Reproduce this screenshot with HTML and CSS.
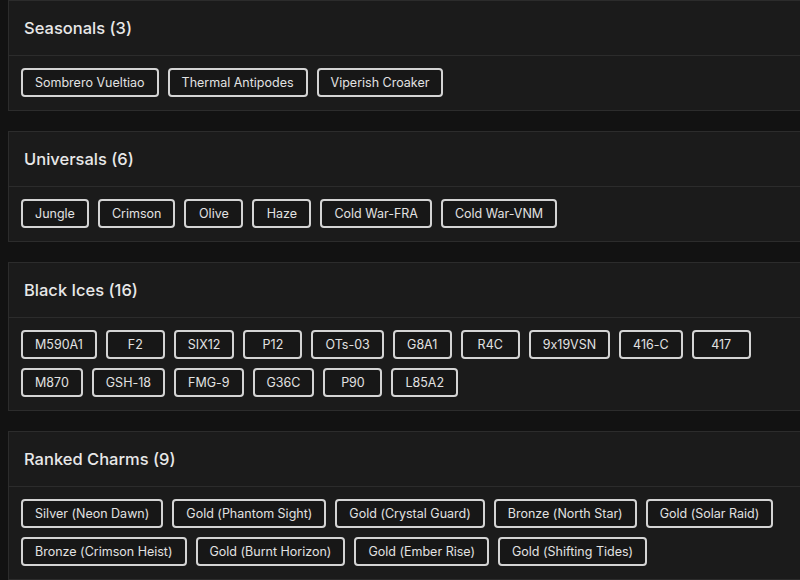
FILE: index.html
```html
<!DOCTYPE html>
<html lang="en">

<head>
	<meta charset="UTF-8" />
	<meta name="viewport" content="width=device-width, initial-scale=1.0" />
	<title>Collection</title>
	<link rel="stylesheet" href="styles.css">
</head>

<body>
	<div class="page">
		<div class="card">
			<div class="card-head">
				<p class="card-title">Seasonals (3)</p>
			</div>
			<div class="card-body">
				<span class="tag">Sombrero Vueltiao</span>
				<span class="tag">Thermal Antipodes</span>
				<span class="tag">Viperish Croaker</span>
			</div>
		</div>
		<div class="card">
			<div class="card-head">
				<p class="card-title">Universals (6)</p>
			</div>
			<div class="card-body">
				<span class="tag">Jungle</span>
				<span class="tag">Crimson</span>
				<span class="tag">Olive</span>
				<span class="tag">Haze</span>
				<span class="tag">Cold War-FRA</span>
				<span class="tag">Cold War-VNM</span>
			</div>
		</div>
		<div class="card">
			<div class="card-head">
				<p class="card-title">Black Ices (16)</p>
			</div>
			<div class="card-body">
				<span class="tag">M590A1</span>
				<span class="tag">F2</span>
				<span class="tag">SIX12</span>
				<span class="tag">P12</span>
				<span class="tag">OTs-03</span>
				<span class="tag">G8A1</span>
				<span class="tag">R4C</span>
				<span class="tag">9x19VSN</span>
				<span class="tag">416-C</span>
				<span class="tag">417</span>
				<span class="tag">M870</span>
				<span class="tag">GSH-18</span>
				<span class="tag">FMG-9</span>
				<span class="tag">G36C</span>
				<span class="tag">P90</span>
				<span class="tag">L85A2</span>
			</div>
		</div>
		<div class="card">
			<div class="card-head">
				<p class="card-title">Ranked Charms (9)</p>
			</div>
			<div class="card-body">
				<span class="tag">Silver (Neon Dawn)</span>
				<span class="tag">Gold (Phantom Sight)</span>
				<span class="tag">Gold (Crystal Guard)</span>
				<span class="tag">Bronze (North Star)</span>
				<span class="tag">Gold (Solar Raid)</span>
				<span class="tag">Bronze (Crimson Heist)</span>
				<span class="tag">Gold (Burnt Horizon)</span>
				<span class="tag">Gold (Ember Rise)</span>
				<span class="tag">Gold (Shifting Tides)</span>
			</div>
		</div>
	</div>
</body>

</html>
```

FILE: styles.css
```css
body {
	margin: 0;
	overflow: hidden;
	background-color: #121212;
	font-family: Inter, "Noto Sans", sans-serif;
	font-feature-settings: "calt" 0;
	color: #e6e6e6;
}

.page {
	width: 830px;
	padding: 0 0 0 8px;
}

.card {
	background-color: #1b1b1b;
	border: 1px solid #2c2c2c;
	margin-bottom: 20px;
}

.card-head {
	height: 54px;
	padding: 0 15px;
	display: flex;
	align-items: center;
	border-bottom: 1px solid #2c2c2c;
}

.card-title {
	margin: 0;
	font-size: 16.5px;
	font-weight: 500;
	color: #e8e8e8;
}

.card-body {
	display: flex;
	flex-wrap: wrap;
	gap: 9px;
	padding: 12px 12px 13px 12px;
	width: 760px;
}

.tag {
	box-sizing: border-box;
	min-width: 59px;
	padding: 4px 12px;
	line-height: 17px;
	font-size: 12.5px;
	text-align: center;
	color: #e2e2e2;
	border: 2px solid #d4d4d4;
	border-radius: 4px;
	background-color: #171717;
}
```
